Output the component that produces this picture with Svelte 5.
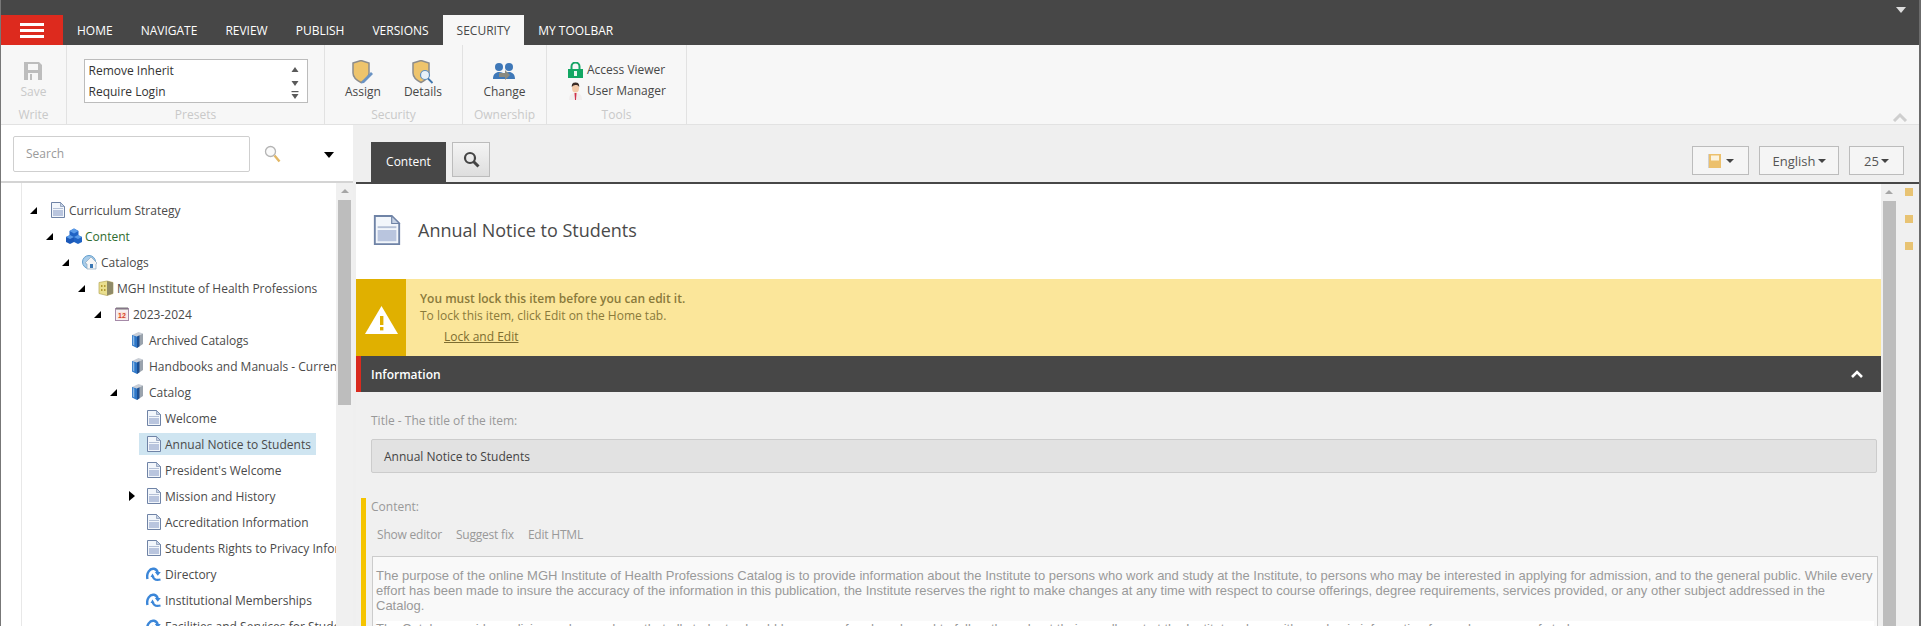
<script>
  const tabs = ['HOME', 'NAVIGATE', 'REVIEW', 'PUBLISH', 'VERSIONS', 'SECURITY', 'MY TOOLBAR'];

  const tree = [
    { level: 0, label: 'Curriculum Strategy', icon: 'doc', open: true },
    { level: 1, label: 'Content', icon: 'cubes', open: true, green: true },
    { level: 2, label: 'Catalogs', icon: 'home', open: true },
    { level: 3, label: 'MGH Institute of Health Professions', icon: 'building', open: true },
    { level: 4, label: '2023-2024', icon: 'calendar', open: true },
    { level: 5, label: 'Archived Catalogs', icon: 'book' },
    { level: 5, label: 'Handbooks and Manuals - Current Academic Year', icon: 'book' },
    { level: 5, label: 'Catalog', icon: 'book', open: true },
    { level: 6, label: 'Welcome', icon: 'doc' },
    { level: 6, label: 'Annual Notice to Students', icon: 'doc', selected: true },
    { level: 6, label: "President's Welcome", icon: 'doc' },
    { level: 6, label: 'Mission and History', icon: 'doc', closed: true },
    { level: 6, label: 'Accreditation Information', icon: 'doc' },
    { level: 6, label: 'Students Rights to Privacy Information', icon: 'doc' },
    { level: 6, label: 'Directory', icon: 'link' },
    { level: 6, label: 'Institutional Memberships', icon: 'link' },
    { level: 6, label: 'Facilities and Services for Students', icon: 'link' }
  ];
</script>

{#snippet docIcon(size)}
  <svg width={size} height={size} viewBox="0 0 16 16" class="icon">
    <path d="M1.500.5h9l4 4v11h-13z" fill="#f2f6fb" stroke="#6f83a6"/>
    <path d="M10.500.5v4h4z" fill="#c6d2e4" stroke="#6f83a6" stroke-width=".6"/>
    <rect x="3" y="6" width="10" height="1" fill="#b4c0d6"/>
    <rect x="3" y="8" width="10" height="6" fill="#b9c5de"/>
  </svg>
{/snippet}

{#snippet nodeIcon(kind)}
  {#if kind === 'doc'}
    {@render docIcon(16)}
  {:else if kind === 'cubes'}
    <svg width="16" height="16" viewBox="0 0 16 16" class="icon">
      <path d="M3.500 3l4.500-2.500L12.500 3v5L8 10.500 3.500 8z" fill="#1f63c4"/>
      <path d="M0 9l4-2 4 2v5l-4 2-4-2z" fill="#1b58b8"/>
      <path d="M8 9l4-2 4 2v5l-4 2-4-2z" fill="#1f63c4"/>
      <path d="M3.500 3L8 .5 12.500 3 8 5.500zM0 9l4-2 4 2-4 2zM8 9l4-2 4 2-4 2z" fill="#5a9be8"/>
    </svg>
  {:else if kind === 'home'}
    <svg width="16" height="16" viewBox="0 0 16 16" class="icon">
      <circle cx="7" cy="8" r="6.500" fill="#a9cdea" stroke="#5f9ccc"/>
      <path d="M3 9l6-6 6 6-1 1v5H5v-5z" fill="#f6f6f6" stroke="#8aa6be" stroke-width=".7"/>
      <rect x="8" y="10" width="3" height="4" fill="#3c78b4"/>
    </svg>
  {:else if kind === 'building'}
    <svg width="16" height="16" viewBox="0 0 16 16" class="icon">
      <path d="M1 2.500l8-1.500 6 1.500v11l-6 2-8-2z" fill="#eadf8e" stroke="#b6a85a" stroke-width=".7"/>
      <path d="M9 1l6 1.500v11l-6 2z" fill="#8f8a68"/>
      <path d="M3 5h1.500v2H3zM6 5h1.500v2H6zM3 9h1.500v2H3zM6 9h1.500v2H6z" fill="#b39c35"/>
    </svg>
  {:else if kind === 'calendar'}
    <svg width="16" height="16" viewBox="0 0 16 16" class="icon">
      <rect x="1.500" y="2.500" width="13" height="12" fill="#f7eef2" stroke="#a58aa8"/>
      <path d="M3 1v3M5 1v3M7 1v3M9 1v3M11 1v3M13 1v3" stroke="#555" stroke-width=".8"/>
      <rect x="3.500" y="6" width="9" height="7" fill="#fbe3d8"/>
      <text x="8" y="12" text-anchor="middle" class="cal-day">12</text>
    </svg>
  {:else if kind === 'book'}
    <svg width="16" height="16" viewBox="0 0 16 16" class="icon">
      <path d="M2 3l6.500-3L13 1.500 7 4.500z" fill="#c9ced6"/>
      <path d="M2 3l5 1.500V16l-5-2.500z" fill="#2f78c8"/>
      <path d="M2.800 4l1.500.5v9l-1.500-.8z" fill="#8fbbe6"/>
      <path d="M7 4.500l6-3V12l-6 4z" fill="#9aa3ad"/>
      <path d="M7 4.500l2.500-1.200V14.300L7 16z" fill="#1c4f92"/>
    </svg>
  {:else}
    <svg width="16" height="16" viewBox="0 0 16 16" class="icon">
      <path d="M1.500 13C0 7 4 2 8 2.800c2 .4 3.200 1.800 3.700 3.700" fill="none" stroke="#3b86d8" stroke-width="2.400"/>
      <path d="M8.800 6h6l-3 3.800z" fill="#3b86d8"/>
      <path d="M6.500 10c1 3.500 4 4.500 8 3.500" fill="none" stroke="#3b86d8" stroke-width="2.200"/>
      <path d="M4.500 11h4L6.500 7.500z" fill="#3b86d8"/>
    </svg>
  {/if}
{/snippet}

<div class="shell">
  <header class="topbar">
    <button class="menu-btn" aria-label="Menu"><span></span><span></span><span></span></button>
    <nav class="tabs">
      {#each tabs as tab}
        <span class="tab" class:active={tab === 'SECURITY'}>{tab}</span>
      {/each}
    </nav>
    <span class="top-arrow"></span>
  </header>

  <section class="ribbon">
    <div class="group write">
      <div class="group-body">
        <div class="big-btn disabled">
          <svg width="18" height="18" viewBox="0 0 18 18">
            <path d="M0 0h15l3 3v15H0z" fill="#bdbdbd"/>
            <rect x="4" y="2" width="10" height="6" fill="#f7f7f7"/>
            <rect x="4" y="11" width="10" height="7" fill="#f7f7f7"/>
            <rect x="6" y="12" width="2" height="6" fill="#bdbdbd"/>
          </svg>
          <span>Save</span>
        </div>
      </div>
      <div class="group-label">Write</div>
    </div>

    <div class="group presets">
      <div class="group-body">
        <div class="listbox">
          <div class="list-items">
            <div>Remove Inherit</div>
            <div>Require Login</div>
          </div>
          <div class="list-arrows">
            <svg width="8" height="36" viewBox="0 0 8 36" fill="#5a5a5a">
              <path d="M4 3l3.500 5h-7z"/>
              <path d="M.5 17h7L4 22z"/>
              <path d="M.5 30h7L4 35z"/>
              <rect x=".5" y="27" width="7" height="1.200"/>
            </svg>
          </div>
        </div>
      </div>
      <div class="group-label">Presets</div>
    </div>

    <div class="group security">
      <div class="group-body two">
        <div class="big-btn">
          <svg width="22" height="24" viewBox="0 0 22 24">
            <path d="M1 3l8-2.500L17 3v10c0 5-4 7.500-8 9.500-4-2-8-4.500-8-9.500z" fill="#eec46c" stroke="#8c8c8c" stroke-width="1.500"/>
            <path d="M10 21l9-9 2 2-9 9-3 .5z" fill="#6a93c4"/>
          </svg>
          <span>Assign</span>
        </div>
        <div class="big-btn">
          <svg width="22" height="24" viewBox="0 0 22 24">
            <path d="M1 3l8-2.500L17 3v10c0 5-4 7.500-8 9.500-4-2-8-4.500-8-9.500z" fill="#eec46c" stroke="#8c8c8c" stroke-width="1.500"/>
            <circle cx="13" cy="15" r="4.500" fill="#e8f1f8" stroke="#5f8fbe" stroke-width="1.200"/>
            <path d="M16 18.500l4.500 4.500" stroke="#3f76ad" stroke-width="1.800"/>
          </svg>
          <span>Details</span>
        </div>
      </div>
      <div class="group-label">Security</div>
    </div>

    <div class="group ownership">
      <div class="group-body">
        <div class="big-btn">
          <svg width="22" height="24" viewBox="0 0 22 24">
            <circle cx="6" cy="7" r="4" fill="#3f78b8"/>
            <circle cx="16" cy="7" r="4" fill="#3f78b8"/>
            <path d="M0 19c0-5 3-7 6-7s5 1 5 3v4zM11 15c0-2 2-3 5-3s6 2 6 7H11z" fill="#3f78b8"/>
            <path d="M6 13h6v-3l5 5-5 5v-3H6z" fill="#8a8a80"/>
          </svg>
          <span>Change</span>
        </div>
      </div>
      <div class="group-label">Ownership</div>
    </div>

    <div class="group tools">
      <div class="group-body tool-list">
        <div class="tool">
          <svg width="15" height="16" viewBox="0 0 15 16">
            <path d="M3.500 8V4.500a4 4 0 0 1 8 0V8" fill="none" stroke="#17a566" stroke-width="2"/>
            <rect x="0" y="7" width="15" height="9" fill="#12a763"/>
            <rect x="6" y="9" width="3" height="5" fill="#e9f7ef"/>
          </svg>
          <span>Access Viewer</span>
        </div>
        <div class="tool">
          <svg width="15" height="18" viewBox="0 0 15 18">
            <path d="M1 18c0-5 2-7 6.500-7s6.500 2 6.500 7z" fill="#f1eeee"/>
            <path d="M6.500 11h2L8 18H7z" fill="#d0314a"/>
            <ellipse cx="7.500" cy="6" rx="3.500" ry="4.500" fill="#f3c9a8"/>
            <path d="M3.800 5C3.500 1 6 .5 7.500.5S11.500 1 11.200 5C10 3 8 3 6.500 3.200 5 3.500 4.500 4 3.800 5z" fill="#3a2c26"/>
          </svg>
          <span>User Manager</span>
        </div>
      </div>
      <div class="group-label">Tools</div>
    </div>

    <svg class="collapse" width="16" height="10" viewBox="0 0 16 10">
      <path d="M2 9l6-6 6 6" fill="none" stroke="#cfcfcf" stroke-width="3"/>
    </svg>
  </section>

  <div class="workspace">
    <aside class="sidebar">
      <div class="search-row">
        <input class="search" placeholder="Search" />
        <svg class="glass" width="17" height="18" viewBox="0 0 17 18">
          <circle cx="6.500" cy="6.500" r="5" fill="#fafafa" stroke="#b4b4b4" stroke-width="1.300"/>
          <path d="M10.500 10.500l5 6" stroke="#e2b765" stroke-width="2.400"/>
        </svg>
        <span class="search-caret"></span>
      </div>
      <div class="tree-wrap">
        <div class="tree">
          {#each tree as node}
            <div class="row" style="padding-left: {8 + node.level * 16}px">
              <span class="expander" class:shut={node.closed}>
                {#if node.open}
                  <svg width="7" height="7" viewBox="0 0 7 7"><path d="M7 0v7H0z" fill="#000"/></svg>
                {:else if node.closed}
                  <svg width="6" height="10" viewBox="0 0 6 10"><path d="M0 0l6 5-6 5z" fill="#000"/></svg>
                {/if}
              </span>
              <span class="node" class:selected={node.selected} class:green={node.green}>
                {@render nodeIcon(node.icon)}
                <span>{node.label}</span>
              </span>
            </div>
          {/each}
        </div>
        <div class="scrollbar tree-bar">
          <span class="up"></span>
          <span class="thumb"></span>
        </div>
      </div>
    </aside>

    <main class="main">
      <div class="toolbar">
        <div class="editor-tab">Content</div>
        <button class="find-btn" aria-label="Find">
          <svg width="17" height="17" viewBox="0 0 17 17">
            <circle cx="7" cy="7" r="5" fill="none" stroke="#444" stroke-width="2.200"/>
            <path d="M10.500 10.500l5 5" stroke="#444" stroke-width="3"/>
          </svg>
        </button>
        <div class="spacer"></div>
        <button class="drop note" aria-label="Notes">
          <svg width="13" height="14" viewBox="0 0 13 14">
            <rect x="1" y="0" width="12" height="14" fill="#ecc06c"/>
            <rect x="3" y="1.500" width="8" height="5" fill="#fbf3df"/>
            <path d="M0 1h1M0 3h1M0 5h1M0 7h1M0 9h1M0 11h1M0 13h1" stroke="#999" stroke-width=".8"/>
          </svg>
          <i></i>
        </button>
        <button class="drop lang">English<i></i></button>
        <button class="drop count">25<i></i></button>
      </div>

      <div class="body">
        <div class="editor">
          <div class="item-head">
            {@render docIcon(30)}
            <h1>Annual Notice to Students</h1>
          </div>

          <div class="warning">
            <div class="warning-icon">
              <svg width="33" height="28" viewBox="0 0 33 28">
                <path d="M16.500 0L33 28H0z" fill="#fff"/>
                <rect x="15" y="10" width="3.400" height="9" fill="#e0b000"/>
                <rect x="15" y="21" width="3.400" height="3.400" fill="#e0b000"/>
              </svg>
            </div>
            <div class="warning-text">
              <strong>You must lock this item before you can edit it.</strong>
              <span>To lock this item, click Edit on the Home tab.</span>
              <a href="#lock">Lock and Edit</a>
            </div>
          </div>

          <div class="section-head">
            <span>Information</span>
            <svg width="12" height="8" viewBox="0 0 12 8">
              <path d="M1 7L6 2l5 5" fill="none" stroke="#fff" stroke-width="2.600"/>
            </svg>
          </div>

          <div class="fields">
            <div class="field">
              <div class="field-label">Title - The title of the item:</div>
              <div class="readonly">Annual Notice to Students</div>
            </div>
            <div class="field rich">
              <div class="field-label">Content:</div>
              <div class="rich-links">
                <span>Show editor</span><span>Suggest fix</span><span>Edit HTML</span>
              </div>
              <div class="rich-box">
                <p>The purpose of the online MGH Institute of Health Professions Catalog is to provide information about the Institute to persons who work and study at the Institute, to persons who may be interested in applying for admission, and to the general public. While every effort has been made to insure the accuracy of the information in this publication, the Institute reserves the right to make changes at any time with respect to course offerings, degree requirements, services provided, or any other subject addressed in the Catalog.</p>
                <p class="second">The Catalog provides policies and procedures that all students should be aware of and are bound to follow throughout their enrollment at the Institute, along with academic information for each program of study.</p>
              </div>
            </div>
          </div>
        </div>

        <div class="scrollbar main-bar">
          <span class="up"></span>
          <span class="thumb"></span>
        </div>

        <div class="marks">
          <span></span><span></span><span></span>
        </div>
      </div>
    </main>
  </div>
</div>

<style>
  :global(body) {
    margin: 0;
    overflow: hidden;
    font-family: "Open Sans", sans-serif;
  }
  .shell {
    width: 1921px;
    height: 626px;
    box-sizing: border-box;
    border-left: 1px solid #777;
    border-right: 2px solid #6b6b6b;
    display: flex;
    flex-direction: column;
    overflow: hidden;
    font-size: 12px;
    color: #474747;
    background: #f0f0f0;
  }
  .icon { flex-shrink: 0; display: block; }
  .cal-day {
    font: 700 7px "Liberation Sans", sans-serif;
    fill: #d6402b;
  }

  /* Top bar */
  .topbar {
    height: 45px;
    flex-shrink: 0;
    margin-left: -1px;
    margin-right: -2px;
    background: #474747;
    display: flex;
    align-items: flex-end;
    position: relative;
  }
  .menu-btn {
    width: 63px;
    height: 30px;
    padding: 0;
    border: none;
    background: #dd2a1e;
    display: flex;
    flex-direction: column;
    align-items: center;
    justify-content: center;
    gap: 3px;
  }
  .menu-btn span {
    width: 24px;
    height: 3px;
    background: #fff;
  }
  .tabs { display: flex; }
  .tab {
    height: 30px;
    padding: 0 14px;
    display: flex;
    align-items: center;
    color: #fff;
    font-size: 12px;
  }
  .tab.active {
    background: #f7f7f7;
    color: #474747;
  }
  .top-arrow {
    position: absolute;
    right: 15px;
    top: 7px;
    border-left: 5px solid transparent;
    border-right: 5px solid transparent;
    border-top: 6px solid #ddd;
  }

  /* Ribbon */
  .ribbon {
    height: 80px;
    flex-shrink: 0;
    box-sizing: border-box;
    background: #f7f7f7;
    border-bottom: 1px solid #e2e2e2;
    display: flex;
    position: relative;
  }
  .group {
    box-sizing: border-box;
    border-right: 1px solid #e2e2e2;
    display: flex;
    flex-direction: column;
  }
  .write { width: 67px; margin-left: -1px; padding-left: 1px; }
  .presets { width: 258px; }
  .security { width: 138px; }
  .ownership { width: 84px; }
  .tools { width: 140px; }
  .group-body {
    flex: 1;
    display: flex;
    justify-content: center;
    min-height: 0;
  }
  .group-body.two { gap: 23px; }
  .group-label {
    height: 17px;
    line-height: 16px;
    text-align: center;
    color: #c9c9c9;
    flex-shrink: 0;
  }
  .big-btn {
    display: flex;
    flex-direction: column;
    align-items: center;
    padding-top: 15px;
    height: 40px;
  }
  .big-btn svg { flex-shrink: 0; }
  .big-btn span {
    margin-top: auto;
    line-height: 16px;
    color: #474747;
  }
  .big-btn.disabled svg { margin-top: 2px; }
  .big-btn.disabled span { color: #c9c9c9; }
  .listbox {
    width: 224px;
    height: 44px;
    margin-top: 14px;
    box-sizing: border-box;
    border: 1px solid #bcbcbc;
    background: #fff;
    display: flex;
    justify-content: space-between;
  }
  .list-items {
    padding: 0 0 0 4px;
    line-height: 21px;
    color: #333;
  }
  .list-arrows {
    padding: 4px 8px 0 0;
  }
  .tool-list {
    flex-direction: column;
    justify-content: flex-start;
    padding: 14px 0 0 21px;
    gap: 0;
  }
  .tool {
    height: 21px;
    display: flex;
    align-items: center;
    gap: 4px;
    color: #474747;
  }
  .tool svg { flex-shrink: 0; }
  .collapse {
    position: absolute;
    right: 11px;
    top: 67px;
  }

  /* Workspace */
  .workspace {
    flex: 1;
    min-height: 0;
    display: flex;
  }
  .sidebar {
    width: 352px;
    flex-shrink: 0;
    background: #fff;
    display: flex;
    flex-direction: column;
  }
  .search-row {
    height: 58px;
    flex-shrink: 0;
    box-sizing: border-box;
    border-bottom: 2px solid #d4d4d4;
    display: flex;
    align-items: flex-start;
    padding: 11px 0 0 12px;
    position: relative;
  }
  .search {
    width: 237px;
    height: 36px;
    box-sizing: border-box;
    border: 1px solid #cfcfcf;
    border-radius: 2px;
    padding: 0 12px 2px;
    font: 12px "Open Sans", sans-serif;
    background: #fff;
  }
  .search::placeholder { color: #9a9a9a; opacity: 1; }
  .glass { margin: 9px 0 0 14px; }
  .search-caret {
    margin: 16px 0 0 43px;
    border-left: 5px solid transparent;
    border-right: 5px solid transparent;
    border-top: 6px solid #000;
  }
  .tree-wrap {
    flex: 1;
    min-height: 0;
    display: flex;
  }
  .tree {
    flex: 1;
    min-width: 0;
    margin-left: 20px;
    border-left: 1px solid #e8e8e8;
    padding-top: 14px;
    overflow: hidden;
  }
  .row {
    height: 26px;
    display: flex;
    align-items: center;
    white-space: nowrap;
  }
  .expander {
    width: 13px;
    flex-shrink: 0;
    display: flex;
    align-items: center;
  }
  .expander.shut { padding-left: 3px; box-sizing: border-box; }
  .node {
    height: 22px;
    display: inline-flex;
    align-items: center;
    gap: 3px;
    padding: 0 5px 0 7px;
    color: #4a4a4a;
  }
  .node.selected { background: #cfe5f1; }
  .node.green { color: #2f6b2f; }

  .scrollbar {
    width: 16px;
    flex-shrink: 0;
    box-sizing: border-box;
    background: #f0f0f0;
    display: flex;
    flex-direction: column;
    align-items: center;
    position: relative;
  }
  .tree-bar { width: 17px; }
  .scrollbar .up {
    margin-top: 6px;
    border-left: 4px solid transparent;
    border-right: 4px solid transparent;
    border-bottom: 4px solid #a6a6a6;
  }
  .scrollbar .thumb {
    width: 13px;
    background: #bdbdbd;
    margin-top: 7px;
  }
  .tree-bar .thumb { height: 205px; }
  .main-bar .thumb { height: 440px; }

  /* Main area */
  .main {
    flex: 1;
    min-width: 0;
    display: flex;
    flex-direction: column;
    background: #efefef;
  }
  .toolbar {
    height: 59px;
    flex-shrink: 0;
    box-sizing: border-box;
    margin-left: 3px;
    border-bottom: 2px solid #474747;
    padding: 17px 15px 0 15px;
    display: flex;
    align-items: flex-start;
  }
  .editor-tab {
    width: 75px;
    height: 40px;
    background: #474747;
    color: #fff;
    display: flex;
    align-items: center;
    justify-content: center;
    padding-bottom: 2px;
    box-sizing: border-box;
  }
  .find-btn {
    width: 38px;
    height: 35px;
    margin-left: 6px;
    padding: 0;
    border: 1px solid #bcbcbc;
    background: linear-gradient(#f4f4f4, #dedede);
    display: flex;
    align-items: center;
    justify-content: center;
  }
  .spacer { flex: 1; }
  .drop {
    height: 29px;
    margin: 4px 0 0 10px;
    box-sizing: border-box;
    border: 1px solid #bcbcbc;
    background: #f5f5f5;
    color: #555;
    font: 13px "Open Sans", sans-serif;
    padding: 0;
    display: flex;
    align-items: center;
    justify-content: center;
  }
  .drop i {
    margin-left: 2px;
    border-left: 4px solid transparent;
    border-right: 4px solid transparent;
    border-top: 4px solid #444;
  }
  .note { width: 57px; }
  .note i { margin-left: 5px; }
  .lang { width: 80px; }
  .count { width: 55px; }

  .body {
    flex: 1;
    min-height: 0;
    display: flex;
    margin-left: 3px;
  }
  .editor {
    flex: 1;
    min-width: 0;
    display: flex;
    flex-direction: column;
    background: #f0f0f0;
  }
  .item-head {
    height: 95px;
    flex-shrink: 0;
    box-sizing: border-box;
    background: #fff;
    display: flex;
    align-items: center;
    padding: 0 0 4px 16px;
    gap: 16px;
  }
  .item-head h1 {
    margin: 0;
    font-size: 18px;
    font-weight: 400;
    color: #4a4a4a;
  }
  .warning {
    height: 77px;
    flex-shrink: 0;
    background: #fbe69a;
    display: flex;
    color: #8a7a3a;
  }
  .warning-icon {
    width: 50px;
    flex-shrink: 0;
    background: #e0b000;
    display: flex;
    align-items: center;
    justify-content: center;
    padding-top: 4px;
    box-sizing: border-box;
  }
  .warning-text {
    padding: 11px 0 0 14px;
    display: flex;
    flex-direction: column;
    line-height: 17px;
  }
  .warning-text strong { font-weight: 600; }
  .warning-text a {
    margin: 4px 0 0 24px;
    color: #7d6d30;
    text-decoration: underline;
  }
  .section-head {
    height: 36px;
    flex-shrink: 0;
    box-sizing: border-box;
    background: #474747;
    border-left: 5px solid #d92a1e;
    padding: 0 18px 0 10px;
    display: flex;
    align-items: center;
    justify-content: space-between;
    color: #fff;
    font-weight: 600;
  }
  .fields {
    flex: 1;
    min-height: 0;
    overflow: hidden;
    padding: 20px 4px 0 5px;
  }
  .field { padding-left: 10px; }
  .field-label {
    line-height: 18px;
    color: #999;
    height: 27px;
  }
  .readonly {
    height: 34px;
    box-sizing: border-box;
    border: 1px solid #ccc;
    border-radius: 2px;
    background: #e2e2e2;
    padding: 0 12px;
    line-height: 34px;
    color: #444;
  }
  .rich {
    margin-top: 25px;
    border-left: 5px solid #f5c400;
    padding-left: 5px;
    margin-right: -1px;
    padding-top: 0;
  }
  .rich .field-label { height: 28px; }
  .rich-links {
    display: flex;
    gap: 14px;
    padding-left: 6px;
    color: #999;
    line-height: 18px;
    height: 30px;
    letter-spacing: -0.2px;
  }
  .rich-box {
    margin-left: 1px;
    box-sizing: border-box;
    height: 200px;
    border: 1px solid #cccccc;
    background: #f9f9f9;
    padding: 11px 3px 0 3px;
    font: 13px/15px "Liberation Sans", Arial, sans-serif;
    color: #999;
  }
  .rich-box p { margin: 0; }
  .rich-box .second {
    margin-top: 8px;
    background: #fff;
  }

  .main-bar { background: #f0f0f0; }
  .marks {
    width: 22px;
    flex-shrink: 0;
    background: #f0f0f0;
    padding: 4px 0 0 8px;
    box-sizing: border-box;
    display: flex;
    flex-direction: column;
    gap: 19px;
  }
  .marks span {
    width: 8px;
    height: 8px;
    background: #e8c373;
  }
</style>
